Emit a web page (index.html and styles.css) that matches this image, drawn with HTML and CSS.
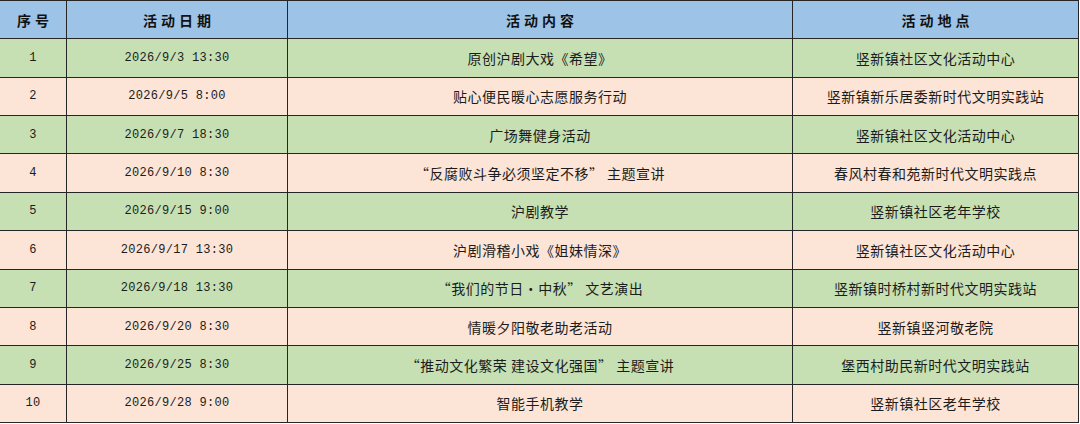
FILE: index.html
```html
<!DOCTYPE html>
<html lang="zh">
<head>
<meta charset="utf-8">
<link rel="stylesheet" href="styles.css">
</head>
<body>
<table class="sched">
  <colgroup>
    <col class="c-no"><col class="c-date"><col class="c-title"><col class="c-place">
  </colgroup>
  <thead>
    <tr><th>序号</th><th>活动日期</th><th>活动内容</th><th>活动地点</th></tr>
  </thead>
  <tbody>
    <tr class="g"><td class="num">1</td><td class="num">2026/9/3 13:30</td><td>原创沪剧大戏《希望》</td><td>竖新镇社区文化活动中心</td></tr>
    <tr class="p"><td class="num">2</td><td class="num">2026/9/5 8:00</td><td>贴心便民暖心志愿服务行动</td><td>竖新镇新乐居委新时代文明实践站</td></tr>
    <tr class="g"><td class="num">3</td><td class="num">2026/9/7 18:30</td><td>广场舞健身活动</td><td>竖新镇社区文化活动中心</td></tr>
    <tr class="p"><td class="num">4</td><td class="num">2026/9/10 8:30</td><td>“反腐败斗争必须坚定不移” 主题宣讲</td><td>春风村春和苑新时代文明实践点</td></tr>
    <tr class="g"><td class="num">5</td><td class="num">2026/9/15 9:00</td><td>沪剧教学</td><td>竖新镇社区老年学校</td></tr>
    <tr class="p"><td class="num">6</td><td class="num">2026/9/17 13:30</td><td>沪剧滑稽小戏《姐妹情深》</td><td>竖新镇社区文化活动中心</td></tr>
    <tr class="g"><td class="num">7</td><td class="num">2026/9/18 13:30</td><td>“我们的节日·中秋” 文艺演出</td><td>竖新镇时桥村新时代文明实践站</td></tr>
    <tr class="p"><td class="num">8</td><td class="num">2026/9/20 8:30</td><td>情暖夕阳敬老助老活动</td><td>竖新镇竖河敬老院</td></tr>
    <tr class="g"><td class="num">9</td><td class="num">2026/9/25 8:30</td><td>“推动文化繁荣 建设文化强国” 主题宣讲</td><td>堡西村助民新时代文明实践站</td></tr>
    <tr class="p"><td class="num">10</td><td class="num">2026/9/28 9:00</td><td>智能手机教学</td><td>竖新镇社区老年学校</td></tr>
  </tbody>
</table>
</body>
</html>
```

FILE: styles.css
```css
html, body {
  margin: 0;
  padding: 0;
  background: #ffffff;
}

.sched {
  border-collapse: collapse;
  table-layout: fixed;
  width: 1079px;
  margin-left: -1px;
  font-family: "Noto Sans CJK SC", "Noto Sans", sans-serif;
  font-size: 14px;
  color: #1c1c1c;
}

.c-no { width: 67px; }
.c-date { width: 221px; }
.c-title { width: 505px; }
.c-place { width: 286px; }

.sched th,
.sched td {
  border: 1px solid #262626;
  text-align: center;
  vertical-align: middle;
  padding: 0;
  height: 37.36px;
  line-height: 16px;
  white-space: nowrap;
  letter-spacing: 0.5px;
}

.sched th {
  background: #9dc3e6;
  font-weight: 700;
  letter-spacing: 4px;
  text-indent: 4px;
  color: #111;
}

.sched tr.g td { background: #c6e0b4; }
.sched tr.p td { background: #fce4d6; }

.sched td.num {
  font-family: "Liberation Mono", "DejaVu Sans Mono", monospace;
  font-size: 12px;
  letter-spacing: 0.3px;
}
```
